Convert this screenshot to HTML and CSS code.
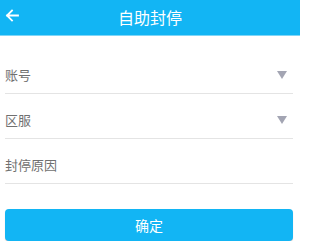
FILE: index.html
```html
<!DOCTYPE html>
<html>
<head>
<meta charset="utf-8">
<link rel="stylesheet" href="styles.css">
</head>
<body>
<div class="page">
<header class="topbar">
  <svg class="back" width="14" height="13" viewBox="0 0 14 13"><path d="M13 6.5H2M7 1.5L2 6.5L7 11.5" fill="none" stroke="#fff" stroke-width="1.8" stroke-linecap="square"/></svg>
  <h1 class="title">自助封停</h1>
</header>
<main class="form">
  <div class="row"><span class="label">账号</span><span class="tri"></span></div>
  <div class="row"><span class="label">区服</span><span class="tri"></span></div>
  <div class="row"><span class="label">封停原因</span></div>
  <button class="submit">确定</button>
</main>
</div>
</body>
</html>
```
FILE: styles.css
```css
* { box-sizing: border-box; }
body {
  margin: 0;
  background: #fff;
  font-family: "Noto Sans CJK SC", "Noto Sans", sans-serif;
}
.page {
  width: 300px;
}
.topbar {
  height: 36px;
  background: #12b5f4;
  border-bottom: 1px solid #7fd6f7;
  display: flex;
  align-items: center;
  justify-content: center;
  position: relative;
}
.back {
  position: absolute;
  left: 5px;
  top: 9px;
}
.title {
  margin: 0;
  color: #fff;
  font-size: 16px;
  font-weight: normal;
  line-height: 20px;
  margin-top: -1px;
}
.form {
  padding: 13px 7px 0 5px;
  display: flex;
  flex-direction: column;
}
.row {
  height: 45px;
  padding-top: 8px;
  border-bottom: 1px solid #e4e4e4;
  display: flex;
  align-items: center;
  justify-content: space-between;
}
.label {
  font-size: 13px;
  color: #707070;
  line-height: 16px;
}
.tri {
  width: 0;
  height: 0;
  border-left: 5px solid transparent;
  border-right: 5px solid transparent;
  border-top: 8px solid #a3a5b3;
  margin-right: 6px;
}
.submit {
  margin-top: 25px;
  height: 32px;
  border: none;
  border-radius: 4px;
  background: #12b5f4;
  color: #fff;
  font-family: inherit;
  font-size: 14px;
  box-shadow: 0 1px 1px rgba(210, 120, 100, 0.35);
}
```
